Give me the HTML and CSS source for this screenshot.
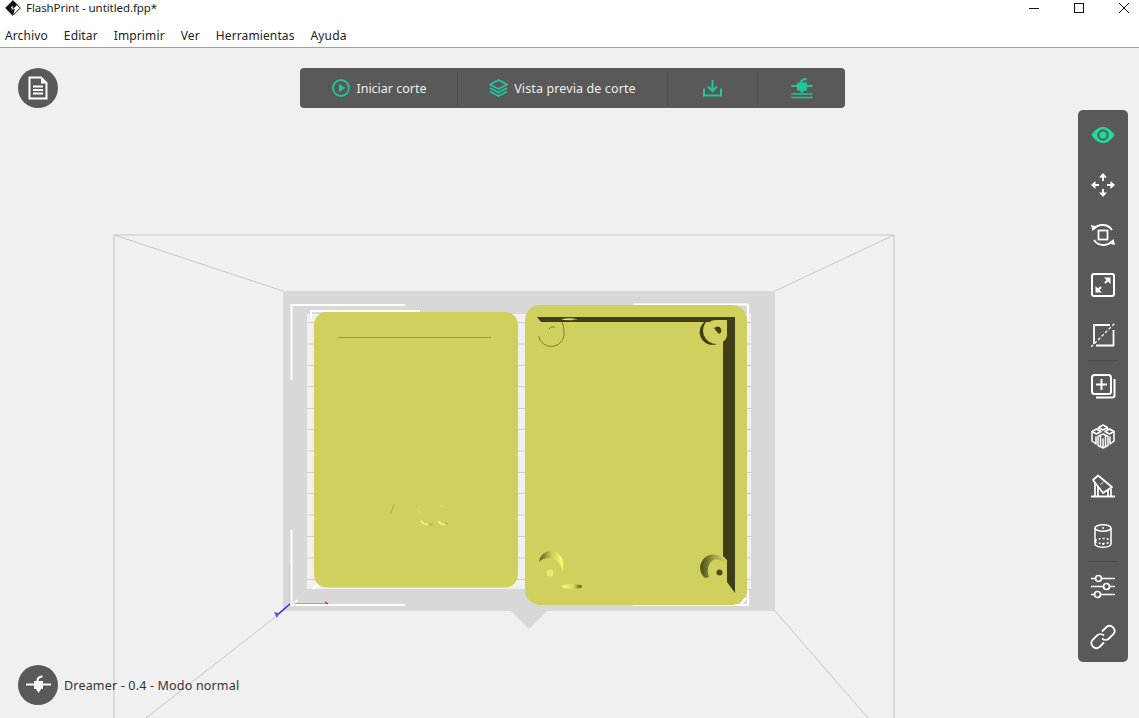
FILE: index.html
```html
<!DOCTYPE html>
<html lang="es">
<head>
<meta charset="utf-8">
<title>FlashPrint - untitled.fpp*</title>
<link rel="stylesheet" href="styles.css">
</head>
<body>
<div class="app">
  <header class="titlebar">
    <svg class="logo" width="16" height="16" viewBox="0 0 16 16"><path d="M8 .7 15.300 8 8 15.300 .7 8Z" fill="#fff" stroke="#111"/><path d="M8 .5 .5 8 8 15.500 9.800 9.200H7.800L12.200 4.700Z" fill="#111"/><path d="M7.800 4.800 5.600 8.300H7.200L6.400 11 8.600 7.400H7.200Z" fill="#fff"/></svg>
    <span class="title">FlashPrint - untitled.fpp*</span>
    <div class="winctl">
      <svg width="12" height="12" viewBox="0 0 12 12"><path d="M1 6.500H11" stroke="#111" fill="none"/></svg>
      <svg width="12" height="12" viewBox="0 0 12 12"><rect x="1.500" y="1.500" width="9" height="9" stroke="#111" fill="none"/></svg>
      <svg width="12" height="12" viewBox="0 0 12 12"><path d="M1 1 11 11M11 1 1 11" stroke="#111" fill="none"/></svg>
    </div>
  </header>
  <nav class="menubar">
    <span>Archivo</span><span>Editar</span><span>Imprimir</span><span>Ver</span><span>Herramientas</span><span>Ayuda</span>
  </nav>
  <main class="stage">
    <svg class="scene" viewBox="0 48 1139 670" width="1139" height="670">
      <defs>
        <linearGradient id="bump" x1="0" x2="1" y1="0" y2="0"><stop offset="0" stop-color="#5c5a20"/><stop offset=".5" stop-color="#c9c95a"/><stop offset="1" stop-color="#ffff70"/></linearGradient>
        <linearGradient id="bumpr" x1="0" x2="1" y1="0" y2="0"><stop offset="0" stop-color="#4a481a"/><stop offset=".55" stop-color="#a5a548"/><stop offset="1" stop-color="#d0d05f"/></linearGradient>
        <linearGradient id="sliver" x1="0" x2="1" y1="0" y2="0"><stop offset="0" stop-color="#ffff70"/><stop offset=".6" stop-color="#d5d55f"/><stop offset="1" stop-color="#4d4b1c"/></linearGradient>
      </defs>
      <g class="room">
        <path d="M114 718V235H894V718M114 235 283 291M894 235 775 291M283 611 146 718M775 611 868 718"/>
      </g>
      <path class="plate" d="M283 291H775V611H547L529 629 511 611H283Z"/>
      <rect class="grid" x="307" y="314" width="444" height="275"/>
      <path class="gridlines" d="M307 322.500H751M307 344H751M307 365.500H751M307 386.500H751M307 408.500H751M307 429.500H751M307 451H751M307 472.500H751M307 493.500H751M307 515H751M307 536.500H751M307 558H751M307 579.500H751"/>
      <path class="white" d="M405 305H291.500V380M291.500 530V605H405M633 304.500H748V320M633 605H748V590M311 319V311H420M313 589 320 583M294 603 298 600"/>
      <path class="axis-y" d="M289.500 604V566"/>
      <path class="axis-x" d="M295 603.500H327"/>
      <path class="axis-z" d="M290 604 276 616"/>
      <path class="axis-tip" d="M274 612 279 613 277 618Z"/>
      <path class="axis-tick" d="M325 602 328 604"/>

      <rect class="model" x="314" y="312" width="204" height="275.500" rx="13"/>
      <path class="modeline" d="M338 337.500H491"/>
      <path class="mark" d="M394 504 391 513"/>
      <path class="mark-light" d="M421 505Q417 509 420 513M440 506Q443 507 445 506"/>
      <path class="mark-bright" d="M421 521Q424 525 428 524M438 521Q441 525 445 524" />
      <path class="mark" d="M429 524Q431 525 433 524M445 523 448 524" />

      <rect class="model" x="525" y="305" width="222" height="300" rx="15"/>
      <path class="dark" d="M537 317H735V593L727 582V560L723 556V322H562L541 322Z"/>
      <path class="sliver" d="M561 319.500Q570 317 579 319.500Q570 321 561 319.500Z" />
      <path class="thin-arc" d="M538.500 336A12.500 12.500 0 0 0 564 331Q564 326 562 322M549 329Q552 325 555 328"/>
      <path class="model-fill" d="M716 320H727V335A9 9 0 0 1 716 343A11.500 11.500 0 0 1 716 320Z"/>
      <path class="dark" d="M708 320A13.500 13.500 0 0 0 717 344A11.500 11.500 0 0 1 708 320Z"/>
      <path class="dark" d="M716 327A3.800 3.800 0 0 1 719 334Q716 331 714 328Z"/>
      <path class="bump" d="M539 562A11 12 0 0 1 563 566L563 572Q560 558 548 558 541 559 539 562Z"/>
      <path class="bumpr" d="M705 578A10 10 0 0 1 722 557.500L727 562V566Q721 558 713 560 705 566 709 577Z"/>
      <circle class="hole" cx="719.500" cy="572.500" r="3"/>
      <ellipse class="hole-s" cx="550" cy="573" rx="3.500" ry="3.500"/>
      <ellipse class="sliver" cx="572" cy="586.500" rx="10" ry="2.500"/>
      <path class="white" d="M741 604 746 598"/>
    </svg>

    <button class="round doc" aria-label="Documento">
      <svg width="20" height="24" viewBox="0 0 20 24"><path d="M1.500 1.500H13L18.500 7V22.500H1.500Z" fill="none" stroke="#fff" stroke-width="2"/><path d="M13 1V7.500H19Z" fill="#fff"/><path d="M5 10.500H15M5 14H15M5 17.500H15" stroke="#fff" stroke-width="2"/></svg>
    </button>

    <div class="topbar">
      <div class="tb-item w157">
        <svg width="18" height="18" viewBox="0 0 18 18"><circle cx="9" cy="9" r="8" fill="none" stroke="#1fc79a" stroke-width="1.800"/><path d="M6.800 4.800 13.200 9 6.800 13.200Z" fill="#1fc79a"/></svg>
        <span>Iniciar corte</span>
      </div>
      <div class="tb-item w210">
        <svg width="19" height="19" viewBox="0 0 19 19"><g fill="none" stroke="#1fc79a" stroke-width="1.800" stroke-linejoin="round"><path d="M9.500 1 18 5.500 9.500 10 1 5.500Z"/><path d="M1 9 9.500 13.500 18 9"/><path d="M1 12.500 9.500 17 18 12.500"/></g></svg>
        <span class="tight">Vista previa de corte</span>
      </div>
      <div class="tb-item w90">
        <svg width="19" height="18" viewBox="0 0 19 18"><g fill="none" stroke="#1fc79a" stroke-width="2"><path d="M1 9.500V16.500H18V9.500"/><path d="M9.500 1V11.500M5 7.500 9.500 12 14 7.500"/></g></svg>
      </div>
      <div class="tb-item w88 last">
        <svg width="24" height="21" viewBox="0 0 24 21"><path d="M1.500 8H22.500" stroke="#1fc79a" stroke-width="2"/><path d="M7 4.500H17V12.500H14.500L12 15.500 9.500 12.500H7Z" fill="#1fc79a"/><path d="M11 5C11 2.500 13 1 16.500 1" fill="none" stroke="#1fc79a" stroke-width="2"/><path d="M1.500 16H22.500M1.500 19.500H22.500" stroke="#1fc79a" stroke-width="1.700"/></svg>
      </div>
    </div>

    <aside class="sidebar">
      <div class="sb-item">
        <svg width="24" height="16" viewBox="0 0 24 16"><path d="M0.500 8C4 2.500 8 0 12 0S20 2.500 23.500 8C20 13.500 16 16 12 16S4 13.500 .5 8Z" fill="#1fdc9c"/><circle cx="12" cy="8" r="4.700" fill="none" stroke="#55635c" stroke-width="2.200"/></svg>
      </div>
      <div class="sb-item">
        <svg width="24" height="24" viewBox="0 0 24 24"><g fill="none" stroke="#fff" stroke-width="1.800"><path d="M12 3V8M12 16V21M3 12H8M16 12H21"/></g><path d="M12 0 16 4.500H8ZM12 24 8 19.500H16ZM0 12 4.500 8V16ZM24 12 19.500 16V8Z" fill="#fff"/></svg>
      </div>
      <div class="sb-item">
        <svg width="24" height="24" viewBox="0 0 24 24"><g fill="none" stroke="#fff" stroke-width="1.800"><rect x="7.500" y="7.500" width="9" height="9"/><path d="M3 6C6 1.500 16 -0.500 21 7"/><path d="M21 18C18 22.500 8 24.500 3 17"/></g><path d="M0 2 6.500 3.500 1.500 8ZM24 22 17.500 20.500 22.500 16Z" fill="#fff"/></svg>
      </div>
      <div class="sb-item">
        <svg width="24" height="24" viewBox="0 0 24 24"><rect x="1" y="1" width="22" height="22" rx="2" fill="none" stroke="#fff" stroke-width="2"/><path d="M14 10 18 6M10 14 6 18" stroke="#fff" stroke-width="2"/><path d="M13 4.500H19.500V11ZM11 19.500H4.500V13Z" fill="#fff"/></svg>
      </div>
      <div class="sb-item">
        <svg width="24" height="24" viewBox="0 0 24 24"><path d="M19 2H3V21M5 22.500H22.500V7" fill="none" stroke="#fff" stroke-width="1.800" stroke-linejoin="round"/><path d="M0 24 24 0" fill="none" stroke="#fff" stroke-width="1.300" stroke-dasharray="3 2"/></svg>
      </div>
      <div class="sb-sep"></div>
      <div class="sb-item">
        <svg width="25" height="25" viewBox="0 0 25 25"><rect x="1" y="1" width="19" height="19" rx="2.500" fill="none" stroke="#fff" stroke-width="2"/><path d="M10.500 5V16M5 10.500H16" stroke="#fff" stroke-width="2"/><path d="M23.500 5V21.500A2 2 0 0 1 21.500 23.500H5" fill="none" stroke="#fff" stroke-width="2"/></svg>
      </div>
      <div class="sb-item">
        <svg width="24" height="25" viewBox="0 0 24 25"><g fill="none" stroke="#fff" stroke-width="1.500" stroke-linejoin="round"><path d="M12 1 16.500 3.500 12 6 7.500 3.500Z"/><path d="M5.500 5 10 7.500 5.500 10 1 7.500Z"/><path d="M18.500 5 23 7.500 18.500 10 14 7.500Z"/><path d="M1 7.500V17L5 20V12.500M23 7.500V17L19 20V12.500M7.500 3.500V7M16.500 3.500V7"/><path d="M12 10 17 12.500V21.500L12 24 7 21.500V12.500Z"/><path d="M12 14.500V24M9.500 12V22M14.500 12V22"/></g></svg>
      </div>
      <div class="sb-item">
        <svg width="24" height="24" viewBox="0 0 24 24"><g fill="none" stroke="#fff" stroke-width="1.700" stroke-linejoin="round"><path d="M7 1.500 21 13 12 19 2 6Z"/><path d="M4 8.500V22M7 12V22M17 16V22M20 14.500V22"/><path d="M12.500 8 9.500 10.500" stroke-width="1"/></g><path d="M0 21.500H24V23.500H0Z" fill="#fff"/></svg>
      </div>
      <div class="sb-item">
        <svg width="18" height="24" viewBox="0 0 18 24"><g fill="none" stroke="#fff" stroke-width="1.500"><ellipse cx="9" cy="4" rx="8" ry="3.200"/><path d="M1 4V20C1 22 5 23.300 9 23.300S17 22 17 20V4"/><path d="M1 16.500C3 15 6 14.500 9 14.500S15 15 17 16.500" stroke-dasharray="2 2"/><path d="M1 17.500C3 19 6 19.500 9 19.500S15 19 17 17.500" stroke-dasharray="2 2"/></g><circle cx="9" cy="4" r="1" fill="#fff"/><circle cx="9" cy="20" r="1" fill="#fff"/></svg>
      </div>
      <div class="sb-sep"></div>
      <div class="sb-item">
        <svg width="24" height="24" viewBox="0 0 24 24"><g fill="none" stroke="#fff" stroke-width="1.700"><path d="M0 3.500H4M11 3.500H24M0 11.500H12M19 11.500H24M0 19.500H3M10 19.500H24"/><circle cx="7.500" cy="3.500" r="3"/><circle cx="15.500" cy="11.500" r="3"/><circle cx="6.500" cy="19.500" r="3"/></g></svg>
      </div>
      <div class="sb-item">
        <svg width="26" height="26" viewBox="0 0 26 26"><g fill="none" stroke="#fff" stroke-width="1.800"><path d="M12 7.500 16.500 3A5 5 0 0 1 23.500 10L19 14.500A5 5 0 0 1 12 14.500"/><path d="M14 18.500 9.500 23A5 5 0 0 1 2.500 16L7 11.500A5 5 0 0 1 14 11.500"/></g></svg>
      </div>
    </aside>

    <div class="status">
      <button class="round" aria-label="Impresora">
        <svg width="25" height="20" viewBox="0 0 25 20"><path d="M0 9.500H25" stroke="#fff" stroke-width="2"/><path d="M8 6H17V14H15L12.500 18 10 14H8Z" fill="#fff"/><path d="M11.500 6C11.500 3 13.500 1.500 16.500 1.500" fill="none" stroke="#fff" stroke-width="2"/></svg>
      </button>
      <span>Dreamer - 0.4 - Modo normal</span>
    </div>
  </main>
</div>
</body>
</html>
```

FILE: styles.css
```css
* { box-sizing: border-box; }
html, body { margin: 0; height: 100%; overflow: hidden; }
body {
  font-family: "Noto Sans", "Open Sans", sans-serif;
  font-size: 12px;
  color: #222;
  background: #fff;
}
.app { display: flex; flex-direction: column; height: 718px; width: 1139px; }

.titlebar { display: flex; align-items: center; height: 24px; padding: 0 0 8px 5px; background: #fff; flex: none; }
.logo { margin-right: 5px; }
.title { font-size: 11.500px; line-height: 16px; letter-spacing: -.08px; }
.winctl { display: flex; gap: 33px; margin-left: auto; margin-right: 9px; }
.winctl svg { display: block; }

.menubar { display: flex; gap: 16px; height: 24px; padding: 3px 0 0 5px; background: #fff; border-bottom: 1px solid #a0a0a0; flex: none; line-height: 17px; letter-spacing: .12px; }

.stage { position: relative; flex: 1; background: #f0f0f0; overflow: hidden; }
.scene { position: absolute; left: 0; top: 0; display: block; }

.room path { fill: none; stroke: #c6c6c6; stroke-width: 1; }
.plate { fill: #d8d8d8; }
.grid { fill: #f0f0f0; }
.gridlines { fill: none; stroke: #d0d0d0; stroke-width: 1; }
.white { fill: none; stroke: #fff; stroke-width: 2; }
.axis-y { stroke: #90ee90; fill: none; stroke-width: 1; }
.axis-x { stroke: #e58a8a; fill: none; }
.axis-z { stroke: #2a2ae0; fill: none; stroke-width: 1.500; }
.axis-tip { fill: #5a5ae0; }
.axis-tick { stroke: #e02040; fill: none; stroke-width: 1.500; }
.model, .model-fill { fill: #d0d05f; }
.modeline { stroke: #9c9c3e; fill: none; }
.mark { stroke: #a9a94a; fill: none; }
.mark-light { stroke: #dcdc74; fill: none; }
.mark-bright { stroke: #f5f57a; fill: none; stroke-width: 1.500; }
.dark { fill: #403e17; }
.thin-arc { fill: none; stroke: #6b6a26; stroke-width: .8; }
.sliver { fill: url(#sliver); }
.bump { fill: url(#bump); }
.bumpr { fill: url(#bumpr); }
.hole { fill: #4d4b1c; }
.hole-s { fill: #e9e96a; }

.round { width: 40px; height: 40px; border: 0; padding: 0; border-radius: 50%; background: #595959; display: flex; align-items: center; justify-content: center; flex: none; }
.doc { position: absolute; left: 18px; top: 20px; }

.topbar { position: absolute; left: 300px; top: 20px; width: 545px; height: 40px; background: #595959; border-radius: 4px; display: flex; align-items: center; color: #eee; font-size: 12.500px; }
.tb-item { height: 33px; display: flex; align-items: center; justify-content: center; gap: 6px; border-right: 1px solid #4c4c4c; letter-spacing: 0; }
.tb-item .tight { letter-spacing: .12px; }
.w157 { width: 158px; padding-left: 2px; }
.w210 { width: 210px; }
.w90 { width: 90px; }
.w88 { width: 87px; }
.tb-item.last { border-right: 0; }

.sidebar { position: absolute; left: 1078px; top: 62px; width: 50px; height: 552px; background: #595959; border-radius: 5px; display: flex; flex-direction: column; align-items: center; }
.sb-item { height: 50px; width: 50px; display: flex; align-items: center; justify-content: center; flex: none; }
.sb-sep { height: 1px; width: 30px; background: #4c4c4c; flex: none; }

.status { position: absolute; left: 18px; top: 617px; display: flex; align-items: center; gap: 6px; color: #333; font-size: 12.500px; letter-spacing: .18px; }
```
